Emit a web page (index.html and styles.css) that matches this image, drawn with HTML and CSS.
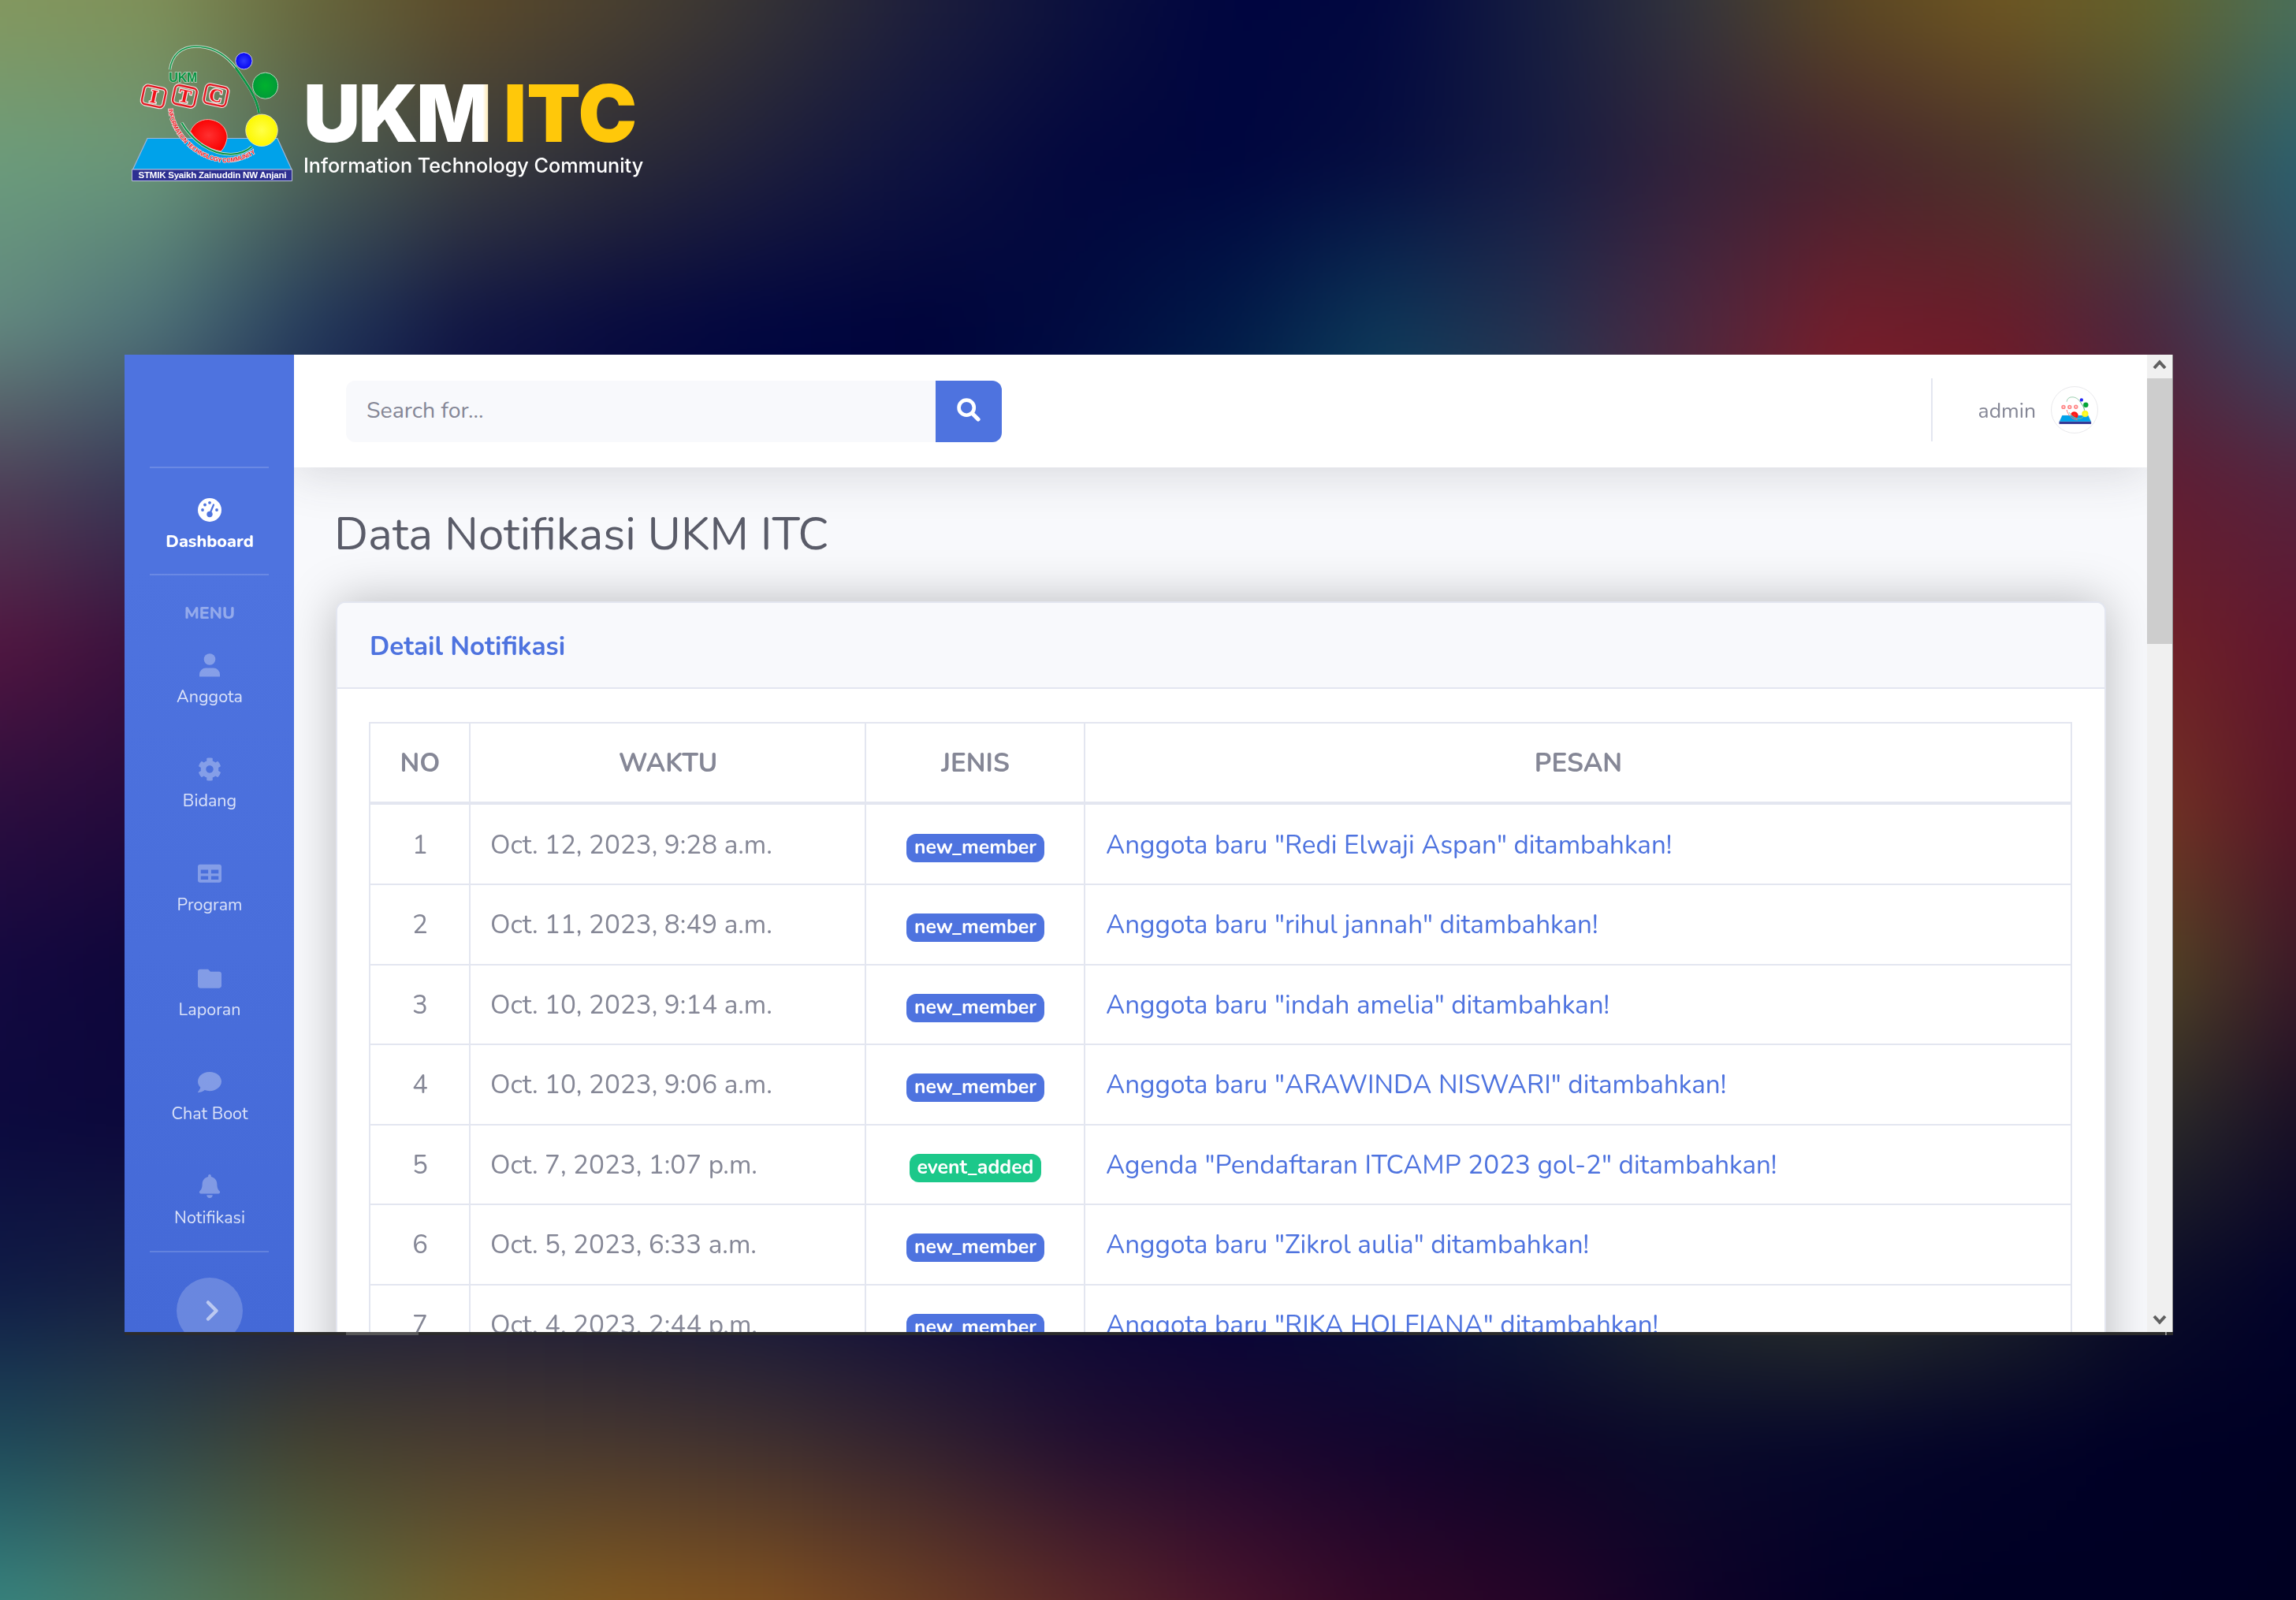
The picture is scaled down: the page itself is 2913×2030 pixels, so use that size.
FILE: index.html
```
<!DOCTYPE html>
<html lang="id">
<head>
<meta charset="utf-8">
<title>UKM ITC - Data Notifikasi</title>
<link rel="stylesheet" href="styles.css">
</head>
<body>
<canvas class="backdrop" id="backdrop" width="16" height="11"></canvas>

<header class="brand">
  <svg class="brand-mark" viewBox="0 0 215 185">
    <defs>
      <radialGradient id="gBlue"><stop offset="0" stop-color="#2f3bff"/><stop offset="1" stop-color="#0606f0"/></radialGradient>
      <radialGradient id="gGreen"><stop offset="0" stop-color="#00b22e"/><stop offset="1" stop-color="#009a38"/></radialGradient>
      <radialGradient id="gYellow"><stop offset="0" stop-color="#ffff48"/><stop offset="1" stop-color="#fdf800"/></radialGradient>
      <radialGradient id="gRed"><stop offset="0" stop-color="#ff3030"/><stop offset="1" stop-color="#fa0404"/></radialGradient>
      <path id="arcText" d="M54 88C55 118 86 153 124 156C142 156 158 150 169 140"/>
      <symbol id="mark" viewBox="0 0 215 185">
        <path d="M27 125.5H192L210 165H8.5z" fill="#00a2ea" stroke="#9fb6d8" stroke-width="1.2"/>
        <path d="M7.5 165H210.5V179.5H7.5z" fill="#2e3192" stroke="#b9bfd8" stroke-width="1"/>
        <path d="M55.6 38.3C58 20 70 9 89 9C108 9 125 17 140 37C154 57 166 74 168.6 93.3" fill="none" stroke="#c9dccf" stroke-width="3.4"/>
        <path d="M55.6 38.3C58 20 70 9 89 9C108 9 125 17 140 37" fill="none" stroke="#0b9444" stroke-width="1.4"/>
        <path d="M139 36C154 57 166 74 168.6 93.3" fill="none" stroke="#0b9444" stroke-width="2.8"/>
        <circle cx="149.4" cy="27.3" r="10.6" fill="url(#gBlue)" stroke="#c8c8e8" stroke-width="1"/>
        <ellipse cx="176.6" cy="58.7" rx="16" ry="16.6" fill="url(#gGreen)" stroke="#b8d8c0" stroke-width="1"/>
        <path d="M81.5 116.7C86 105 98 100 108 102C124 105 131 119 127 130C126 134 124 138 120.4 142C105 139 90 131 81.5 116.7z" fill="url(#gRed)" stroke="#f0b0a8" stroke-width="1"/>
        <circle cx="172" cy="115.3" r="20.2" fill="url(#gYellow)" stroke="#e8e8b0" stroke-width="1"/>
        <path d="M70.4 105.7C84 129 108 146 133 145.7C144 145.5 153 142 159.6 136" fill="none" stroke="#d5e5da" stroke-width="3.6"/>
        <path d="M70.4 105.7C84 129 108 146 133 145.7C144 145.5 153 142 159.6 136" fill="none" stroke="#0b9444" stroke-width="2"/>
      </symbol>
    </defs>
    <use href="#mark" width="215" height="185"/>
    <text class="mark-ukm" x="54.3" y="54.3" textLength="36">UKM</text>
    <g class="mark-tile" transform="translate(35.2 72.3) rotate(12)"><rect x="-14" y="-12" width="28" height="24" rx="5"/><rect class="inner" x="-14" y="-12" width="28" height="24" rx="5"/><text y="8">I</text></g>
    <g class="mark-tile" transform="translate(74.4 71.9) rotate(12)"><rect x="-14" y="-12" width="28" height="24" rx="5"/><rect class="inner" x="-14" y="-12" width="28" height="24" rx="5"/><text y="8">T</text></g>
    <g class="mark-tile" transform="translate(114 71) rotate(12)"><rect x="-14" y="-12" width="28" height="24" rx="5"/><rect class="inner" x="-14" y="-12" width="28" height="24" rx="5"/><text y="8">C</text></g>
    <text class="mark-arc"><textPath href="#arcText" textLength="148">INFORMATION TECHNOLOGY COMMUNITY</textPath></text>
    <text class="mark-base" x="15.5" y="176" textLength="188">STMIK Syaikh Zainuddin NW Anjani</text>
  </svg>
  <div class="brand-words">
    <div class="brand-name"><span class="brand-ukm">UKM</span> <span class="brand-itc">ITC</span></div>
    <div class="brand-tag">Information Technology Community</div>
  </div>
</header>

<div class="window">
  <div class="app">
    <nav class="sidebar">
      <div class="side-brand"></div>
      <hr class="side-line">
      <a class="side-item active">
        <svg class="side-icon" viewBox="0 0 30 30"><circle cx="15" cy="15" r="15" fill="#fff"/><g fill="#4e73df"><circle cx="6" cy="15" r="1.9"/><circle cx="9" cy="8.5" r="1.9"/><circle cx="15" cy="5.8" r="1.9"/><circle cx="24" cy="15" r="1.9"/><circle cx="15" cy="20.5" r="3.7"/></g><path d="M15.6 19L20 8.5" stroke="#4e73df" stroke-width="2.2" stroke-linecap="round"/></svg>
        <span>Dashboard</span>
      </a>
      <hr class="side-line">
      <div class="side-heading">MENU</div>
      <a class="side-item"><svg class="side-icon" viewBox="0 0 30 30"><circle cx="15" cy="7.5" r="7.3"/><path d="M2 29.5v-2.7a8.2 8.2 0 0 1 8.2-8.2h9.6a8.2 8.2 0 0 1 8.2 8.2v2.7z"/></svg><span>Anggota</span></a>
      <a class="side-item"><svg class="side-icon" viewBox="0 0 512 512"><path d="M487.4 315.7l-42.6-24.6c4.3-23.2 4.3-47 0-70.2l42.6-24.6c4.9-2.8 7.1-8.6 5.5-14-11.1-35.6-30-67.8-54.7-94.6-3.8-4.1-10-5.1-14.8-2.3L380.8 110c-17.9-15.4-38.5-27.3-60.8-35.1V25.8c0-5.6-3.9-10.5-9.4-11.7-36.7-8.2-74.3-7.8-109.2 0-5.5 1.2-9.4 6.1-9.4 11.7V75c-22.2 7.9-42.8 19.8-60.8 35.1L88.7 85.5c-4.9-2.8-11-1.9-14.8 2.3-24.7 26.7-43.6 58.9-54.7 94.6-1.7 5.4.6 11.2 5.5 14L67.3 221c-4.3 23.2-4.3 47 0 70.2l-42.6 24.6c-4.9 2.8-7.1 8.6-5.5 14 11.1 35.6 30 67.8 54.7 94.6 3.8 4.1 10 5.1 14.8 2.3l42.6-24.6c17.9 15.4 38.5 27.3 60.8 35.1v49.2c0 5.6 3.9 10.5 9.4 11.7 36.7 8.2 74.3 7.8 109.2 0 5.5-1.2 9.4-6.1 9.4-11.7v-49.2c22.2-7.9 42.8-19.8 60.8-35.1l42.6 24.6c4.9 2.8 11 1.9 14.8-2.3 24.7-26.7 43.6-58.9 54.7-94.6 1.5-5.5-.7-11.3-5.6-14.1zM256 336c-44.1 0-80-35.9-80-80s35.9-80 80-80 80 35.9 80 80-35.9 80-80 80z"/></svg><span>Bidang</span></a>
      <a class="side-item"><svg class="side-icon" viewBox="0 0 512 512"><path d="M464 66H48C21.500 66 0 86 0 110v300c0 26.500 21.500 48 48 48h416c26.500 0 48-21.500 48-48V110c0-24-21.500-44-48-44zM224 394H64v-80h160v80zm0-134H64v-80h160v80zm224 134H288v-80h160v80zm0-134H288v-80h160v80z"/></svg><span>Program</span></a>
      <a class="side-item"><svg class="side-icon" viewBox="0 0 512 512"><path d="M464 116H272l-50-52H48C21.500 64 0 85.500 0 112v312c0 26.500 21.500 48 48 48h416c26.500 0 48-21.500 48-48V164c0-26.500-21.500-48-48-48z"/></svg><span>Laporan</span></a>
      <a class="side-item"><svg class="side-icon" viewBox="0 0 512 512"><path d="M256 32C114.600 32 0 125.100 0 240c0 49.600 21.400 95 57 130.700C44.500 421.100 2.700 466 2.200 466.500c-2.200 2.300-2.800 5.700-1.500 8.700S4.800 480 8 480c66.300 0 116-31.800 140.600-51.400 32.700 12.300 69 19.400 107.400 19.400 141.400 0 256-93.100 256-208S397.400 32 256 32z"/></svg><span>Chat Boot</span></a>
      <a class="side-item last"><svg class="side-icon" viewBox="0 0 448 512"><path d="M224 512c35.300 0 64-28.600 64-64H160c0 35.400 28.700 64 64 64zm215.400-149.700c-19.300-20.800-55.500-52-55.500-154.300 0-77.700-54.500-139.900-127.900-155.200V32c0-17.700-14.300-32-32-32s-32 14.300-32 32v20.800C118.600 68.100 64.100 130.300 64.100 208c0 102.300-36.200 133.500-55.500 154.300-6 6.500-8.700 14.200-8.600 21.700.1 16.400 13 32 32.100 32h383.800c19.100 0 32-15.600 32.100-32 .1-7.500-2.600-15.300-8.600-21.700z"/></svg><span>Notifikasi</span></a>
      <hr class="side-line">
      <div class="side-toggle"><svg width="18" height="28" viewBox="0 0 18 28"><path d="M4 3.5L14.5 14L4 24.5" fill="none" stroke="currentColor" stroke-width="4.5" stroke-linecap="round" stroke-linejoin="round"/></svg></div>
    </nav>

    <div class="content">
      <div class="topbar">
        <div class="search">
          <div class="search-field">Search for...</div>
          <div class="search-button"><svg width="30" height="30" viewBox="0 0 30 30"><circle cx="12.2" cy="12.2" r="9.6" fill="none" stroke="#fff" stroke-width="4.6"/><path d="M19.5 19.5L27 27" stroke="#fff" stroke-width="5.2" stroke-linecap="round"/></svg></div>
        </div>
        <div class="user">
          <span class="user-name">admin</span>
          <span class="avatar"><svg width="43" height="37" viewBox="0 0 215 185"><use href="#mark" width="215" height="185"/><g fill="none" stroke="#f88" stroke-width="9"><circle cx="35" cy="72" r="9"/><circle cx="74" cy="72" r="9"/><circle cx="114" cy="71" r="9"/></g><path d="M56 90C60 120 90 150 124 154" fill="none" stroke="#f77" stroke-width="5"/></svg></span>
        </div>
      </div>

      <div class="page">
        <h1 class="page-title">Data Notifikasi UKM ITC</h1>
        <section class="card">
          <h2 class="card-title">Detail Notifikasi</h2>
          <div class="table">
            <div class="tr th"><div>NO</div><div>WAKTU</div><div>JENIS</div><div>PESAN</div></div>
            <div class="tr"><div>1</div><div>Oct. 12, 2023, 9:28 a.m.</div><div><span class="badge">new_member</span></div><div>Anggota baru "Redi Elwaji Aspan" ditambahkan!</div></div>
            <div class="tr"><div>2</div><div>Oct. 11, 2023, 8:49 a.m.</div><div><span class="badge">new_member</span></div><div>Anggota baru "rihul jannah" ditambahkan!</div></div>
            <div class="tr"><div>3</div><div>Oct. 10, 2023, 9:14 a.m.</div><div><span class="badge">new_member</span></div><div>Anggota baru "indah amelia" ditambahkan!</div></div>
            <div class="tr"><div>4</div><div>Oct. 10, 2023, 9:06 a.m.</div><div><span class="badge">new_member</span></div><div>Anggota baru "ARAWINDA NISWARI" ditambahkan!</div></div>
            <div class="tr"><div>5</div><div>Oct. 7, 2023, 1:07 p.m.</div><div><span class="badge green">event_added</span></div><div>Agenda "Pendaftaran ITCAMP 2023 gol-2" ditambahkan!</div></div>
            <div class="tr"><div>6</div><div>Oct. 5, 2023, 6:33 a.m.</div><div><span class="badge">new_member</span></div><div>Anggota baru "Zikrol aulia" ditambahkan!</div></div>
            <div class="tr"><div>7</div><div>Oct. 4, 2023, 2:44 p.m.</div><div><span class="badge">new_member</span></div><div>Anggota baru "RIKA HOLFIANA" ditambahkan!</div></div>
          </div>
        </section>
      </div>
    </div>

    <div class="scrollbar">
      <div class="scroll-arrow"><svg width="18" height="13" viewBox="0 0 18 13"><path d="M2 11L9 3.5L16 11" fill="none" stroke="#606060" stroke-width="4"/></svg></div>
      <div class="scroll-thumb"></div>
      <div class="scroll-arrow last"><svg width="18" height="13" viewBox="0 0 18 13"><path d="M2 2L9 9.5L16 2" fill="none" stroke="#606060" stroke-width="4"/></svg></div>
    </div>
  </div>
  <div class="window-edge"><i class="edge-bar"></i><i class="edge-tick"></i></div>
</div>
<script src="backdrop.js"></script>
</body>
</html>
```
FILE: styles.css
```
* { box-sizing: border-box; }

body {
  margin: 0;
  width: 2913px;
  height: 2030px;
  overflow: hidden;
  position: relative;
  background: #02063a;
  font-family: "Nunito", "Lato", sans-serif;
  color: #858796;
}

/* colour mesh: 16 x 11 samples stretched over the page */
.backdrop {
  position: absolute;
  z-index: -1;
  left: -97px;
  top: -101px;
  width: 3107px;
  height: 2233px;
  filter: blur(36px);
}

/* ---------- brand ---------- */
.brand {
  display: flex;
  height: 450px;
  padding: 50px 0 0 160px;
}
.brand-mark { width: 215px; height: 185px; flex: none; }
.mark-ukm { font: bold 16px "Liberation Sans", sans-serif; fill: #0b9444; stroke: #bcd6c2; stroke-width: 1.4px; paint-order: stroke; }
.mark-base { font: bold 11.5px "Liberation Sans", sans-serif; fill: #fff; }
.mark-arc { font: bold 7.6px "Liberation Sans", sans-serif; fill: #ee1c24; stroke: #f3dcdc; stroke-width: 1.4px; paint-order: stroke; }
.mark-tile rect { fill: none; stroke: #f4e4e4; stroke-width: 4.6px; }
.mark-tile .inner { stroke: #e01a22; stroke-width: 2.4px; }
.mark-tile text { font: bold 24px "Liberation Serif", serif; text-anchor: middle; fill: #f01018; stroke: #f6e6e6; stroke-width: 2.6px; paint-order: stroke; }

.brand-words { margin-left: 8px; font-family: "Inter", sans-serif; }
.brand-name { margin: 34px 0 0 2px; font-size: 100px; line-height: 120px; font-weight: 900; letter-spacing: -2.4px; white-space: nowrap; color: #fff; }
.brand-ukm { background: linear-gradient(90deg, #fff 96%, #fff0c8 98%); -webkit-background-clip: text; background-clip: text; color: transparent; }
.brand-itc { color: #ffc80a; letter-spacing: 0; }
.brand-tag { margin: -9px 0 0 2px; font-size: 25.2px; line-height: 30px; font-weight: 500; color: #fff; white-space: nowrap; }

/* ---------- window ---------- */
.window { width: 2599px; height: 1244px; margin-left: 158px; }
.app { display: flex; height: 1240px; overflow: hidden; }
.window-edge { display: flex; height: 4px; background: #2b2b2b; }
.edge-bar { width: 92px; margin-left: 281px; background: #575757; }
.edge-tick { width: 2px; margin-left: 2216px; background: #888; }

/* ---------- sidebar ---------- */
.sidebar {
  width: 215px;
  flex: none;
  display: flex;
  flex-direction: column;
  align-items: center;
  background: linear-gradient(180deg, #4e73df 0, #4e73df 22%, #4469d7 100%);
  color: rgba(255, 255, 255, 0.8);
}
.side-brand { height: 142px; flex: none; }
.side-line { width: 151px; height: 2px; margin: 0; border: 0; background: rgba(255, 255, 255, 0.16); flex: none; }
.side-item {
  display: flex;
  flex-direction: column;
  align-items: center;
  gap: 10px;
  height: 132.2px;
  padding: 33px 0 0 1px;
  font-size: 21.5px;
  line-height: 30px;
  flex: none;
}
.side-item.last { height: 130px; }
.side-item.active { height: 134px; padding-top: 38px; color: #fff; font-weight: 800; }
.side-icon { width: 30px; height: 30px; fill: rgba(255, 255, 255, 0.32); }
.side-heading { height: 66px; flex: none; padding: 30px 0 0 1px; font-size: 21.5px; line-height: 36px; font-weight: 800; color: rgba(255, 255, 255, 0.4); }
.side-toggle {
  display: flex;
  align-items: center;
  justify-content: center;
  width: 84px;
  height: 84px;
  margin: 32px 0 0 1px;
  padding-left: 5px;
  border-radius: 50%;
  flex: none;
  background: rgba(255, 255, 255, 0.2);
  color: rgba(255, 255, 255, 0.55);
}

/* ---------- top bar ---------- */
.content { flex: 1; min-width: 0; overflow: hidden; background: #f8f9fc; }
.topbar {
  position: relative;
  display: flex;
  align-items: center;
  justify-content: space-between;
  height: 143px;
  padding: 0 62px 0 66px;
  background: #fff;
  box-shadow: 0 8px 60px rgba(58, 59, 69, 0.17);
}
.search { display: flex; width: 832px; height: 78px; border-radius: 12px; overflow: hidden; }
.search-field { flex: 1; padding-left: 26px; background: #f8f9fc; font-size: 28.5px; line-height: 76px; }
.search-button { display: flex; align-items: center; justify-content: center; width: 84px; background: #4e73df; padding-bottom: 3px; }
.user { display: flex; align-items: center; gap: 19px; height: 80px; padding-left: 58px; border-left: 2px solid #e3e6f0; margin-bottom: 3px; }
.user-name { font-size: 26.5px; padding-top: 2px; }
.avatar { display: flex; align-items: center; justify-content: center; width: 60px; height: 60px; border: 1px solid #e9e9ec; border-radius: 50%; }

/* ---------- page ---------- */
.page { padding: 51px 52px 0 53px; }
.page-title { margin: 0 0 0 -2px; font-size: 58.1px; line-height: 68px; font-weight: 400; color: #5a5c69; }
.card {
  margin-top: 51px;
  height: 1000px;
  border: 2px solid #e3e6f0;
  border-radius: 12px;
  background: #fff;
  box-shadow: 0 0 62px rgba(0, 0, 0, 0.26);
  overflow: hidden;
}
.card-title { margin: 0; height: 109px; padding: 29px 41px 0; border-bottom: 2px solid #e3e6f0; background: #f8f9fc; font-size: 33.2px; line-height: 52px; font-weight: 700; color: #4e73df; }
.table { margin: 42px 41px 0 40px; border: 2px solid #e3e6f0; border-width: 2px 0 0 2px; font-size: 33.2px; line-height: 50px; }
.tr { display: grid; grid-template-columns: 127px 502px 278px 1fr; height: 101.5px; }
.tr > div { padding: 25px 25px 0; border-right: 2px solid #e3e6f0; border-bottom: 2px solid #e3e6f0; white-space: nowrap; }
.tr > div:nth-child(odd) { text-align: center; padding-left: 1px; padding-right: 0; }
.tr > div:last-child { padding-left: 26px; color: #4e73df; }
.tr.th { height: 102.5px; font-weight: 700; }
.tr.th > div, .tr.th > div:last-child { padding: 25px 0 0 1px; border-bottom-width: 4px; text-align: center; color: #858796; }
.tr.th + .tr { height: 102.5px; }
.tr.th + .tr > div { padding-top: 26px; }
.badge { display: inline-block; height: 36px; padding: 0 10px; border-radius: 12px; background: #4e73df; color: #fff; font-size: 24.8px; line-height: 35px; font-weight: 700; vertical-align: baseline; }
.badge.green { background: #1cc88a; }

/* ---------- scrollbar ---------- */
.scrollbar { display: flex; flex-direction: column; width: 33px; flex: none; background: #f0f0f0; border-right: 1px solid #999; }
.scroll-arrow { display: flex; justify-content: center; height: 30px; padding-top: 6px; }
.scroll-arrow.last { margin-top: auto; padding-top: 8px; }
.scroll-thumb { height: 337px; background: #cdcdcd; }
```
FILE: backdrop.js
```
// Colour samples of the mesh, one row per line, left to right.
const rows = [
  '84985f 7f9058 68673c 5c4b2a 4a4030 343236 1e1f3c 0c113e 000540 020840 161d40 33343c 5a4724 6e5622 64622c 4a705a',
  '6b9c7c 68967a 4e6257 3c3f40 2c2c38 1d1e3c 0d1240 03073e 00063f 060e40 151b42 33223a 46242f 4a332a 46483a 2a6070',
  '628880 4d7078 243a5c 111644 080b40 010640 00043c 010b40 021a48 0d3658 26304f 4c2840 721e2c 6a1c2a 4a2840 344c66',
  '4e4058 353856 1a2450 0a0c40 06083e 010640 00043c 02124a 032a4e 124a64 2a4458 5a2436 8a1c26 801a26 621c32 55243f',
  '521640 38103c 240c40 0a0c40 06083e 010640 00043c 02124a 032a4e 124a64 2a4458 5a2436 8a1c26 801a26 722226 601630',
  '2c0e3e 240a3c 180a3c 0a0c40 06083e 010640 00043c 02124a 032a4e 124a64 2a4458 5a2436 8a1c26 803a22 753424 581528',
  '140940 0e063a 0c083c 0a0c40 06083e 010640 00043c 02124a 032a4e 124a64 2a4458 5a2436 504020 585020 544824 3c1828',
  '0c0a3e 0c083c 10103c 141638 141638 0c123c 080838 050538 04053a 040e3a 0e1c38 242c2e 3a4028 3a3c24 2c2c2a 180f26',
  '101c46 171f40 1a1c3e 1c1c3a 161838 12163c 0c0c3c 080838 04053a 040e3a 0e1c38 242c2e 2e352c 20262a 0c0e28 02022a',
  '1f4a5a 30484a 45422f 4a3c30 48382f 40302f 33222f 241030 1d082f 13052e 0c0528 090a2a 06072a 030328 000026 000024',
  '38857f 4f7c66 5e7044 76612a 82591f 805020 6c3e24 5c2828 4a142c 330828 260528 100228 030026 000024 000024 000022'
];
const ctx = document.getElementById('backdrop').getContext('2d');
rows.forEach((row, y) => row.split(' ').forEach((hex, x) => {
  ctx.fillStyle = '#' + hex;
  ctx.fillRect(x, y, 1, 1);
}));
```
